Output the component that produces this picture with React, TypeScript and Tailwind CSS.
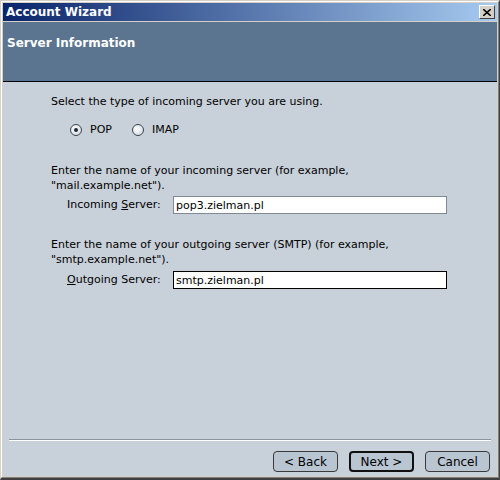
import React, { useState } from "react";

const Radio = ({ checked, label, onClick }: { checked: boolean; label: string; onClick: () => void }) => (
  <label className="flex items-center gap-[8px] cursor-default" onClick={onClick}>
    <span className="flex h-[12px] w-[12px] items-center justify-center rounded-full border border-[#3c4650] bg-[radial-gradient(circle_at_40%_40%,#ffffff,#c9d3dc)]">
      {checked && <span className="h-[4px] w-[4px] rounded-full bg-[#1e2a36]" />}
    </span>
    <span>{label}</span>
  </label>
);

const WizButton = ({ children, isDefault }: { children: React.ReactNode; isDefault?: boolean }) => (
  <button
    className={
      "h-[21px] w-[65px] rounded-[4px] bg-[#b9c5d1] text-[12px] text-black " +
      (isDefault ? "border-2 border-[#101010]" : "border border-[#3a3a3a]")
    }
  >
    {children}
  </button>
);

export default function App() {
  const [type, setType] = useState("pop");
  const [incoming, setIncoming] = useState("pop3.zielman.pl");
  const [outgoing, setOutgoing] = useState("smtp.zielman.pl");

  return (
    <div
      className="flex h-[480px] w-[500px] flex-col border-l border-t border-r border-b-2 border-[#d4d0c8] border-r-[#404040] border-b-[#404040] bg-[#d4d0c8] text-[11px] text-black"
      style={{ fontFamily: '"DejaVu Sans", Verdana, sans-serif' }}
    >
      <div className="flex flex-1 flex-col border border-white border-r-[#808080] border-b-[#808080] p-[1px]">
        {/* title bar */}
        <div className="flex h-[18px] items-center justify-between bg-[linear-gradient(to_right,#0a246a,#a6caf0)] pl-[3px] pr-[2px]">
          <span className="text-[12px] font-bold text-white">Account Wizard</span>
          <span className="flex h-[14px] w-[16px] items-center justify-center border border-white border-r-[#404040] border-b-[#404040] bg-[#d4d0c8]">
            <svg width="8" height="7" viewBox="0 0 8 7">
              <path d="M0 0 L8 7 M8 0 L0 7" stroke="#000" strokeWidth="1.6" />
            </svg>
          </span>
        </div>

        <div className="mt-[1px] flex flex-1 flex-col bg-[#c8d0d9]">
          {/* header */}
          <div className="h-[60px] border-b border-black bg-[#5b7590] pl-[4px] pt-[12px]">
            <span className="text-[12px] font-bold text-white">Server Information</span>
          </div>

          {/* body */}
          <div className="flex flex-1 flex-col pl-[48px] pr-[48px] pt-[12px]">
            <div className="leading-[15px]">Select the type of incoming server you are using.</div>
            <div className="mt-[13px] flex items-center gap-[20px] pl-[19px] leading-[15px]">
              <Radio checked={type === "pop"} label="POP" onClick={() => setType("pop")} />
              <Radio checked={type === "imap"} label="IMAP" onClick={() => setType("imap")} />
            </div>

            <div className="mt-[26px] leading-[15px]">
              Enter the name of your incoming server (for example,
              <br />
              "mail.example.net").
            </div>
            <div className="mt-[3px] flex items-center pl-[16px]">
              <span className="w-[106px]">
                Incoming <u>S</u>erver:
              </span>
              <input
                value={incoming}
                onChange={(e) => setIncoming(e.target.value)}
                className="h-[18px] w-[274px] border border-[#7f8a96] bg-white px-[2px] text-[11px] outline-none"
              />
            </div>

            <div className="mt-[23px] leading-[15px]">
              Enter the name of your outgoing server (SMTP) (for example,
              <br />
              "smtp.example.net").
            </div>
            <div className="mt-[4px] flex items-center pl-[16px]">
              <span className="w-[106px]">
                <u>O</u>utgoing Server:
              </span>
              <input
                value={outgoing}
                onChange={(e) => setOutgoing(e.target.value)}
                className="h-[18px] w-[274px] border border-black bg-white px-[2px] text-[11px] outline-none"
              />
            </div>
          </div>

          {/* footer */}
          <div className="mx-[6px] border-t border-[#8a939e] border-b border-b-white" />
          <div className="flex justify-end gap-[11px] pb-[4px] pr-[7px] pt-[10px]">
            <WizButton>&lt; Back</WizButton>
            <WizButton isDefault>Next &gt;</WizButton>
            <WizButton>Cancel</WizButton>
          </div>
        </div>
      </div>
    </div>
  );
}
